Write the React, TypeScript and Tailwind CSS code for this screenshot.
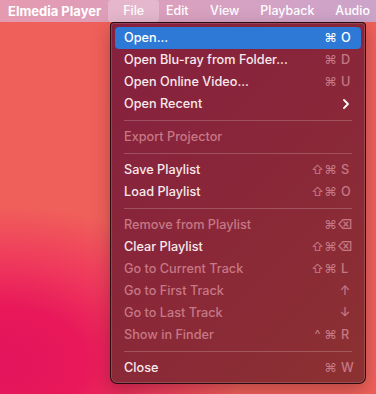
import React from "react";

type Item =
  | "sep"
  | {
      label: string;
      mods?: string[];
      k?: string;
      kc?: string;
      disabled?: boolean;
      active?: boolean;
      submenu?: boolean;
    };

const items: Item[] = [
  { label: "Open...", mods: ["⌘"], k: "O", active: true },
  { label: "Open Blu-ray from Folder...", mods: ["⌘"], k: "D" },
  { label: "Open Online Video...", mods: ["⌘"], k: "U" },
  { label: "Open Recent", submenu: true },
  "sep",
  { label: "Export Projector", disabled: true },
  "sep",
  { label: "Save Playlist", mods: ["⇧", "⌘"], k: "S" },
  { label: "Load Playlist", mods: ["⇧", "⌘"], k: "O" },
  "sep",
  { label: "Remove from Playlist", mods: ["⌘"], k: "⌫", kc: "pl-0", disabled: true },
  { label: "Clear Playlist", mods: ["⇧", "⌘"], k: "⌫", kc: "pl-0" },
  { label: "Go to Current Track", mods: ["⇧", "⌘"], k: "L", disabled: true },
  { label: "Go to First Track", k: "↑", kc: "pl-0 text-center", disabled: true },
  { label: "Go to Last Track", k: "↓", kc: "pl-0 text-center", disabled: true },
  { label: "Show in Finder", mods: ["^", "⌘"], k: "R", disabled: true },
  "sep",
  { label: "Close", mods: ["⌘"], k: "W" },
];

export default function App() {
  return (
    <div
      className="relative w-[376px] h-[394px] overflow-hidden bg-[radial-gradient(ellipse_65%_40%_at_0%_92%,#e3145c_0%,#e8185a_35%,#ef3a5c_65%,#f0605a_100%)] text-[12.7px]"
      style={{ fontFamily: 'Inter, "DejaVu Sans", sans-serif' }}
    >
      {/* menu bar */}
      <div className="h-[22px] flex items-center whitespace-nowrap bg-[linear-gradient(to_right,#e59ab0,#d9a0bf_50%,#cba4ca)] text-white text-[12.4px]">
        <span className="shrink-0 pl-[8px] pr-[11px] font-bold text-[13px] leading-[22px]">Elmedia Player</span>
        <span className="shrink-0 px-[15px] mx-[-4px] leading-[22px] h-[22px] font-medium bg-white/25 rounded-[3px]">File</span>
        <span className="shrink-0 px-[11px] leading-[22px] font-medium">Edit</span>
        <span className="shrink-0 px-[10.5px] leading-[22px] font-medium">View</span>
        <span className="shrink-0 px-[10.5px] leading-[22px] font-medium">Playback</span>
        <span className="shrink-0 px-[10.5px] leading-[22px] font-medium">Audio</span>
      </div>

      {/* dropdown menu */}
      <div className="absolute left-[110px] top-[22px] w-[256px] h-[362px] rounded-t-[4px] rounded-b-[7px] border border-black/70 bg-[linear-gradient(135deg,#86203f_0%,#8a2838_55%,#8c3131_100%)] shadow-[inset_0_0_0_1px_rgba(255,255,255,0.14),0_6px_18px_rgba(0,0,0,0.25)] py-[4px]">
        {items.map((it, i) => {
          if (it === "sep") {
            return (
              <div key={i} className="h-[11px] flex items-center px-[13px]">
                <div className="h-px w-full bg-white/20" />
              </div>
            );
          }
          const textColor = it.active
            ? "text-white"
            : it.disabled
            ? "text-[#c77885]"
            : "text-[#f7e9ec]";
          const scColor = it.active ? "text-white" : "text-[#c77885]";
          return (
            <div
              key={i}
              className={`mx-[4px] h-[22px] flex items-center pl-[9px] pr-[8px] rounded-[4px] ${
                it.active ? "bg-[#2f79d6]" : ""
              }`}
            >
              <span className={`${textColor} font-medium whitespace-nowrap`}>{it.label}</span>
              <div className={`ml-auto flex items-center ${scColor}`}>
                {it.mods?.map((m, j) => (
                  <span key={j} className="w-[13px] text-center">
                    {m}
                  </span>
                ))}
                {it.k && (
                  <span className={`w-[16px] font-medium ${it.kc ?? "pl-[4px]"}`}>{it.k}</span>
                )}
                {it.submenu && (
                  <svg width="16" height="12" viewBox="0 0 16 12" className="text-white">
                    <path d="M7 2 L11 6 L7 10" fill="none" stroke="currentColor" strokeWidth="1.8" strokeLinecap="round" strokeLinejoin="round" />
                  </svg>
                )}
              </div>
            </div>
          );
        })}
      </div>
    </div>
  );
}
